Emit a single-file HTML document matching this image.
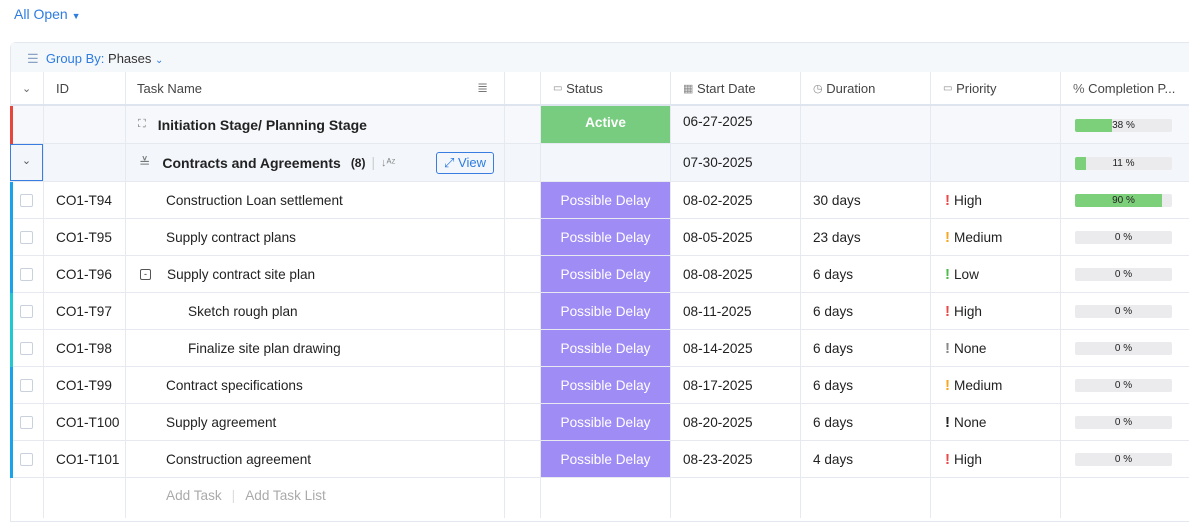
<!DOCTYPE html>
<html><head><meta charset="utf-8"><style>
*{box-sizing:border-box;margin:0;padding:0}
body{width:1189px;height:514px;overflow:hidden;background:#fff;font-family:"Liberation Sans",sans-serif;font-size:13.6px;color:#222;position:relative}
.abs{position:absolute}
.top{left:14px;top:6px;color:#2d7ce0;font-size:14px}
.wrap{position:absolute;left:10px;top:42px;width:1190px;height:480px;border:1px solid #e3e8ef;border-radius:6px 0 0 0;border-right:none}
.gb{position:absolute;left:0;top:0;width:100%;height:30px;background:#f5f8fb;border-bottom:1px solid #e3e8ef}
.row{position:absolute;left:0;width:1179px;border-bottom:1px solid #e6eaf0}
.c{position:absolute;top:0;height:100%;border-right:1px solid #e6eaf0;display:flex;align-items:center;white-space:nowrap}
.hd{color:#444;font-size:13px}
.cb{width:13px;height:13px;border:1px solid #c9d1dc;border-radius:2px;margin-left:9px;background:#fff}
.bar{position:absolute;left:14px;top:50%;margin-top:-6px;width:97px;height:13px;background:#ebebed;border-radius:2px;overflow:hidden}
.bar i{position:absolute;left:0;top:0;bottom:0;background:#7dd07a}
.bar b{position:absolute;left:0;right:0;top:0;text-align:center;font-size:10px;line-height:13px;font-weight:normal;color:#222}
.ex{font-weight:bold;margin-right:4px;font-size:15px}
</style></head><body>
<div class="abs top">All Open <span style="font-size:9px">▼</span></div>
<div class="wrap">
<div class="gb"><div class="abs" style="left:16px;top:8px;font-size:13px;color:#2d7ce0"><span style="color:#8aa3c4">☰</span>&nbsp; Group By: <span style="color:#333">Phases</span> <span style="font-size:10px">⌄</span></div></div>
</div>
<div id="t" class="abs" style="left:11px;top:0;width:1179px"></div>
<script>
const cols=[[0,33],[33,82],[115,379],[494,36],[530,130],[660,130],[790,130],[920,130],[1050,129]];
function row(top,h,cells,bg,left,extra,cls){
 let s=`<div class="row ${cls||''}" style="top:${top}px;height:${h}px;background:${bg||'#fff'};${extra||''}">`;
 cols.forEach((c,i)=>{s+=`<div class="c" style="left:${c[0]}px;width:${c[1]}px;${cells[i]&&cells[i].st||''}">${cells[i]&&cells[i].h||''}</div>`});
 if(left)s+=`<div class="abs" style="left:-1px;top:0;bottom:-1px;width:3px;background:${left}"></div>`;
 return s+'</div>';
}
let H='';
H+=row(72,34,[{h:'<span style="margin-left:11px;color:#666;font-size:11px">⌄</span>'},{h:'<span style="margin-left:12px">ID</span>'},{h:'<span style="margin-left:11px">Task Name</span><span style="position:absolute;right:16px;color:#777">≣</span>'},{},{h:'<span style="margin-left:12px;color:#888;font-size:10px">▭</span>&nbsp;Status'},{h:'<span style="margin-left:12px;color:#888;font-size:11px">▦</span>&nbsp;Start Date'},{h:'<span style="margin-left:12px;color:#888;font-size:11px">◷</span>&nbsp;Duration'},{h:'<span style="margin-left:12px;color:#888;font-size:10px">▭</span>&nbsp;Priority'},{h:'<span style="margin-left:12px;color:#666">%</span>&nbsp;Completion P...'}],'#fff',null,'border-bottom:2px solid #dfe5ee','hd');
const bar=(p)=>`<div class="bar"><i style="width:${p}%"></i><b>${p} %</b></div>`;
H+=row(106,38,[{},{},{h:'<span style="margin-left:12px;color:#777;font-size:11px">⛶</span><span style="margin-left:12px;font-weight:bold;font-size:14px">Initiation Stage/ Planning Stage</span>'},{},{h:'Active',st:'background:#77cc7f;color:#fff;justify-content:center;font-weight:bold;align-items:flex-start;padding-top:9px'},{h:'<span style="margin-left:12px">06-27-2025</span>',st:'align-items:flex-start;padding-top:8px'},{},{},{h:bar(38),st:'align-items:flex-start'}],'#f6f8fb','#e8453c');
H+=row(144,38,[{h:'<div style="position:absolute;left:-1px;top:0;width:33px;height:37px;border:1px solid #3a7de0;text-align:center;line-height:32px;color:#555;font-size:11px">⌄</div>'},{},{h:'<span style="margin-left:13px;color:#777">≚</span><span style="margin-left:12px;font-weight:bold;font-size:14px">Contracts and Agreements</span><span style="margin-left:10px;font-weight:bold;font-size:12px">(8)</span><span style="margin-left:6px;color:#ccc">|</span><span style="margin-left:6px;color:#888;font-size:11px">↓ᴬᶻ</span><span style="position:absolute;right:10px;top:8px;border:1px solid #3a7de0;border-radius:3px;color:#2d7ce0;padding:2px 7px;font-size:13px">⤢ View</span>'},{},{},{h:'<span style="margin-left:12px">07-30-2025</span>'},{},{},{h:bar(11)}],'#f3f7fc');
const tasks=[['CO1-T94','Construction Loan settlement',40,'08-02-2025','30 days','#e84a4a','High',90,'#1aa3e8'],
['CO1-T95','Supply contract plans',40,'08-05-2025','23 days','#f5a623','Medium',0,'#1aa3e8'],
['CO1-T96','Supply contract site plan',40,'08-08-2025','6 days','#4cbb4c','Low',0,'#1aa3e8',1],
['CO1-T97','Sketch rough plan',62,'08-11-2025','6 days','#e84a4a','High',0,'#22c8d0'],
['CO1-T98','Finalize site plan drawing',62,'08-14-2025','6 days','#888','None',0,'#22c8d0'],
['CO1-T99','Contract specifications',40,'08-17-2025','6 days','#f5a623','Medium',0,'#1aa3e8'],
['CO1-T100','Supply agreement',40,'08-20-2025','6 days','#222','None',0,'#1aa3e8'],
['CO1-T101','Construction agreement',40,'08-23-2025','4 days','#e84a4a','High',0,'#1aa3e8']];
tasks.forEach((t,i)=>{
 const nm=t[9]?`<span style="position:absolute;left:14px;width:11px;height:11px;border:1px solid #555;border-radius:2px;font-size:9px;line-height:8px;text-align:center">-</span><span style="margin-left:41px">${t[1]}</span>`:`<span style="margin-left:${t[2]}px">${t[1]}</span>`;
 H+=row(182+i*37,37,[{h:'<div class="cb"></div>'},{h:`<span style="margin-left:12px">${t[0]}</span>`},{h:nm},{},{h:'Possible Delay',st:'background:#a08cf5;color:#fff;justify-content:center'},{h:`<span style="margin-left:12px">${t[3]}</span>`},{h:`<span style="margin-left:12px">${t[4]}</span>`},{h:`<span style="margin-left:14px" class="ex"><span style="color:${t[5]}">!</span></span>${t[6]}`},{h:bar(t[7])}],'#fff',t[8]);
});
H+=row(478,40,[{},{},{h:'<span style="margin-left:40px;color:#aaa">Add Task</span><span style="margin:0 10px;color:#ddd">|</span><span style="color:#aaa">Add Task List</span>',st:'align-items:flex-start;padding-top:10px'},{},{},{},{},{},{}],'#fff',null,'border-bottom:none');
document.getElementById('t').innerHTML=H;
</script>
</body></html>
